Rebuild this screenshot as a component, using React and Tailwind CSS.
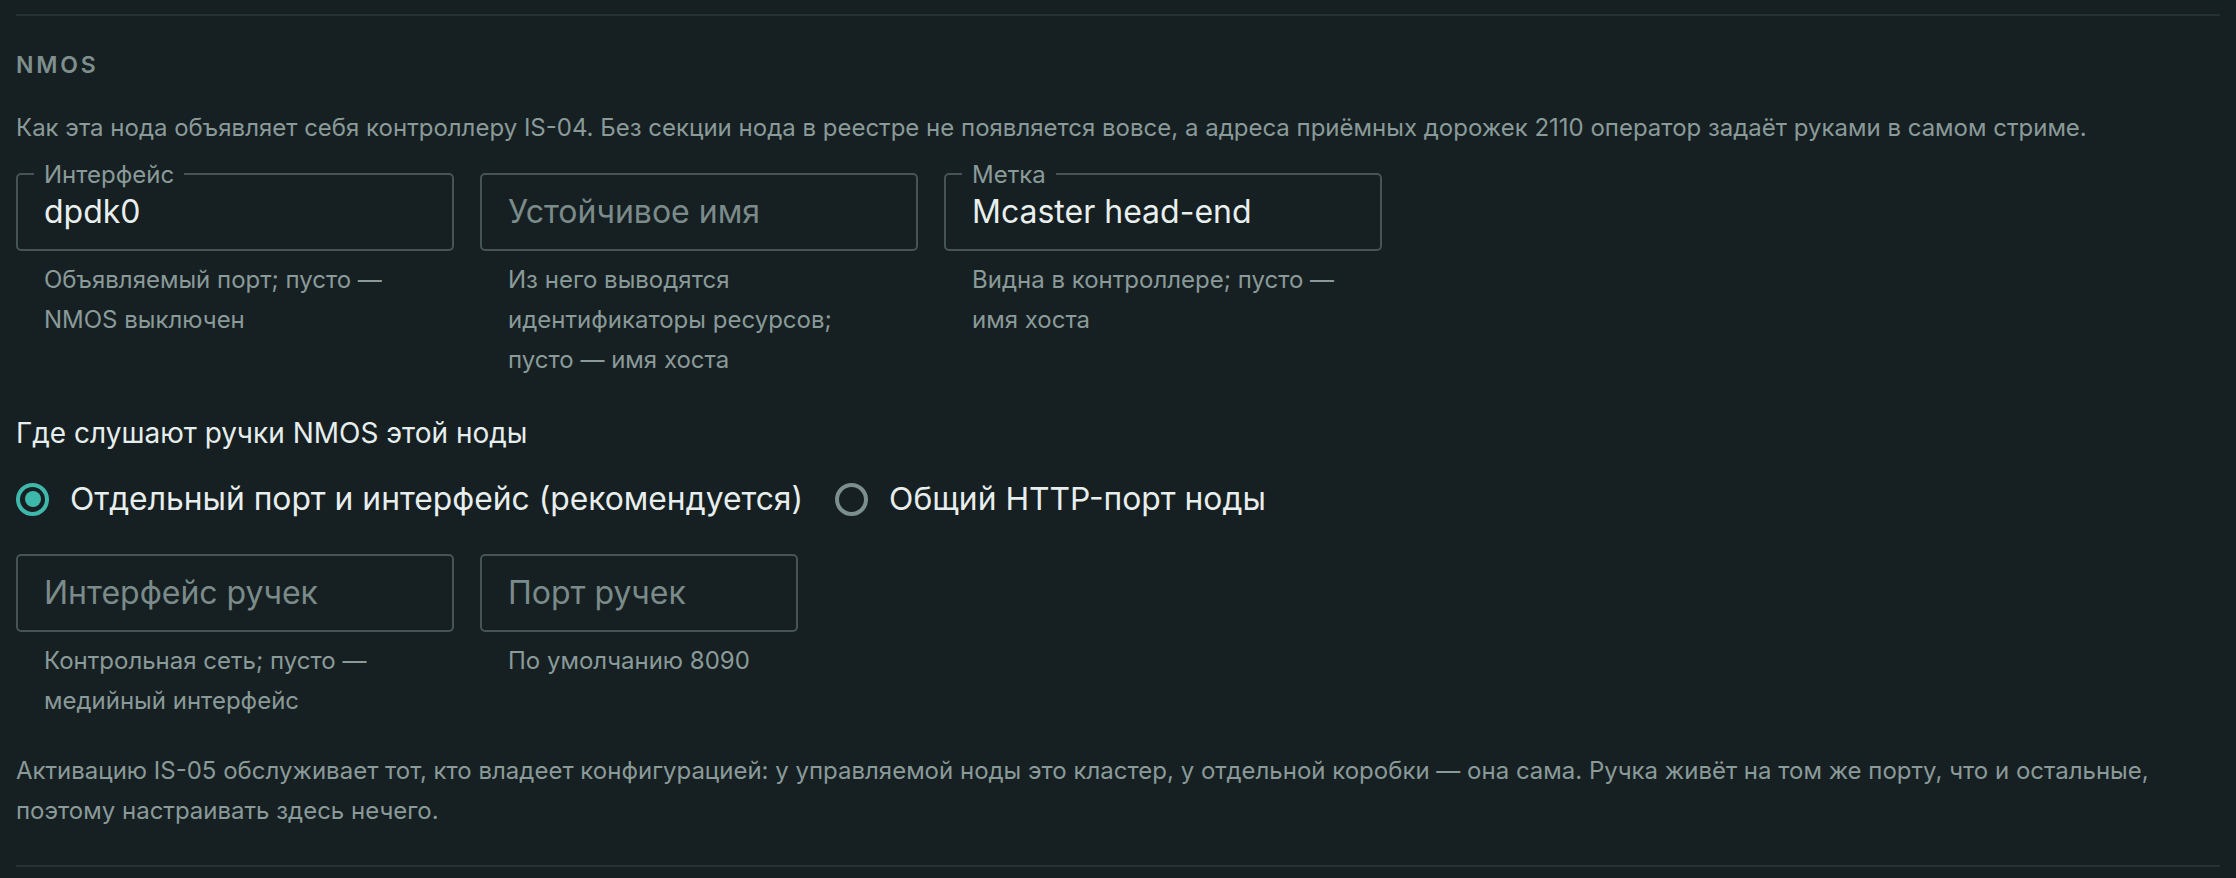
import { useState } from 'react';

// Outlined field with a notched label sitting on the border
const Field = ({ label, value, placeholder, helper, width = 'w-[438px]' }) => (
    <div className={`${width} shrink-0`}>
        <div className="relative h-[78px] rounded-[5px] border-2 border-[#465454] flex items-center px-[26px]">
            {label && (
                <span className="absolute left-[16px] top-0 -translate-y-1/2 px-[10px] bg-[#162022] text-[24px] leading-[28px] text-[#8a9a99]">
                    {label}
                </span>
            )}
            {value ? (
                <span className="text-[32px] text-[#e9efee]">{value}</span>
            ) : (
                <span className="text-[32px] text-[#7b8b8a]">{placeholder}</span>
            )}
        </div>
        {helper && (
            <p className="mt-[9px] pl-[28px] pr-[18px] text-[24px] leading-[40px] text-[#8a9a99]">{helper}</p>
        )}
    </div>
);

const Radio = ({ checked, label, onClick }) => (
    <button type="button" onClick={onClick} className="flex items-center gap-[21px] h-[48px]">
        <span
            className={`w-[33px] h-[33px] rounded-full border-4 flex items-center justify-center ${
                checked ? 'border-[#3fb8ac]' : 'border-[#7c8e8d]'
            }`}
        >
            {checked && <span className="w-[16px] h-[16px] rounded-full bg-[#3fb8ac]" />}
        </span>
        <span className="text-[31.8px] text-[#e8eeed]">{label}</span>
    </button>
);

const App = () => {
    const [mode, setMode] = useState('separate');

    return (
        <div className="min-h-screen bg-[#162022] px-4 pt-[14px] font-['Inter',sans-serif]">
            <section className="border-t-2 border-b-2 border-[#243233] pt-[33px] pb-[34px]">
                <h3 className="text-[23px] leading-[32px] font-semibold tracking-[0.12em] text-[#7e8f8e]">NMOS</h3>
                <p className="mt-[27px] text-[24px] leading-[40px] text-[#8a9a99]">
                    Как эта нода объявляет себя контроллеру IS-04. Без секции нода в реестре не появляется вовсе, а адреса приёмных дорожек 2110 оператор задаёт руками в самом стриме.
                </p>

                <div className="mt-[25px] flex gap-[26px]">
                    <Field label="Интерфейс" value="dpdk0" helper="Объявляемый порт; пусто — NMOS выключен" />
                    <Field placeholder="Устойчивое имя" helper="Из него выводятся идентификаторы ресурсов; пусто — имя хоста" />
                    <Field label="Метка" value="Mcaster head-end" helper="Видна в контроллере; пусто — имя хоста" />
                </div>

                <div className="mt-[37px] text-[28px] leading-[32px] text-[#e6eded]">Где слушают ручки NMOS этой ноды</div>

                <div className="mt-[26px] flex items-center gap-[32px]">
                    <Radio
                        checked={mode === 'separate'}
                        label="Отдельный порт и интерфейс (рекомендуется)"
                        onClick={() => setMode('separate')}
                    />
                    <Radio
                        checked={mode === 'shared'}
                        label="Общий HTTP-порт ноды"
                        onClick={() => setMode('shared')}
                    />
                </div>

                <div className="mt-[31px] flex gap-[26px]">
                    <Field placeholder="Интерфейс ручек" helper="Контрольная сеть; пусто — медийный интерфейс" />
                    <Field placeholder="Порт ручек" helper="По умолчанию 8090" width="w-[318px]" />
                </div>

                <p className="mt-[30px] text-[24px] leading-[40px] text-[#8a9a99]">
                    Активацию IS-05 обслуживает тот, кто владеет конфигурацией: у управляемой ноды это кластер, у отдельной коробки — она сама. Ручка живёт на том же порту, что и остальные, поэтому настраивать здесь нечего.
                </p>
            </section>
        </div>
    );
};

export default App;
